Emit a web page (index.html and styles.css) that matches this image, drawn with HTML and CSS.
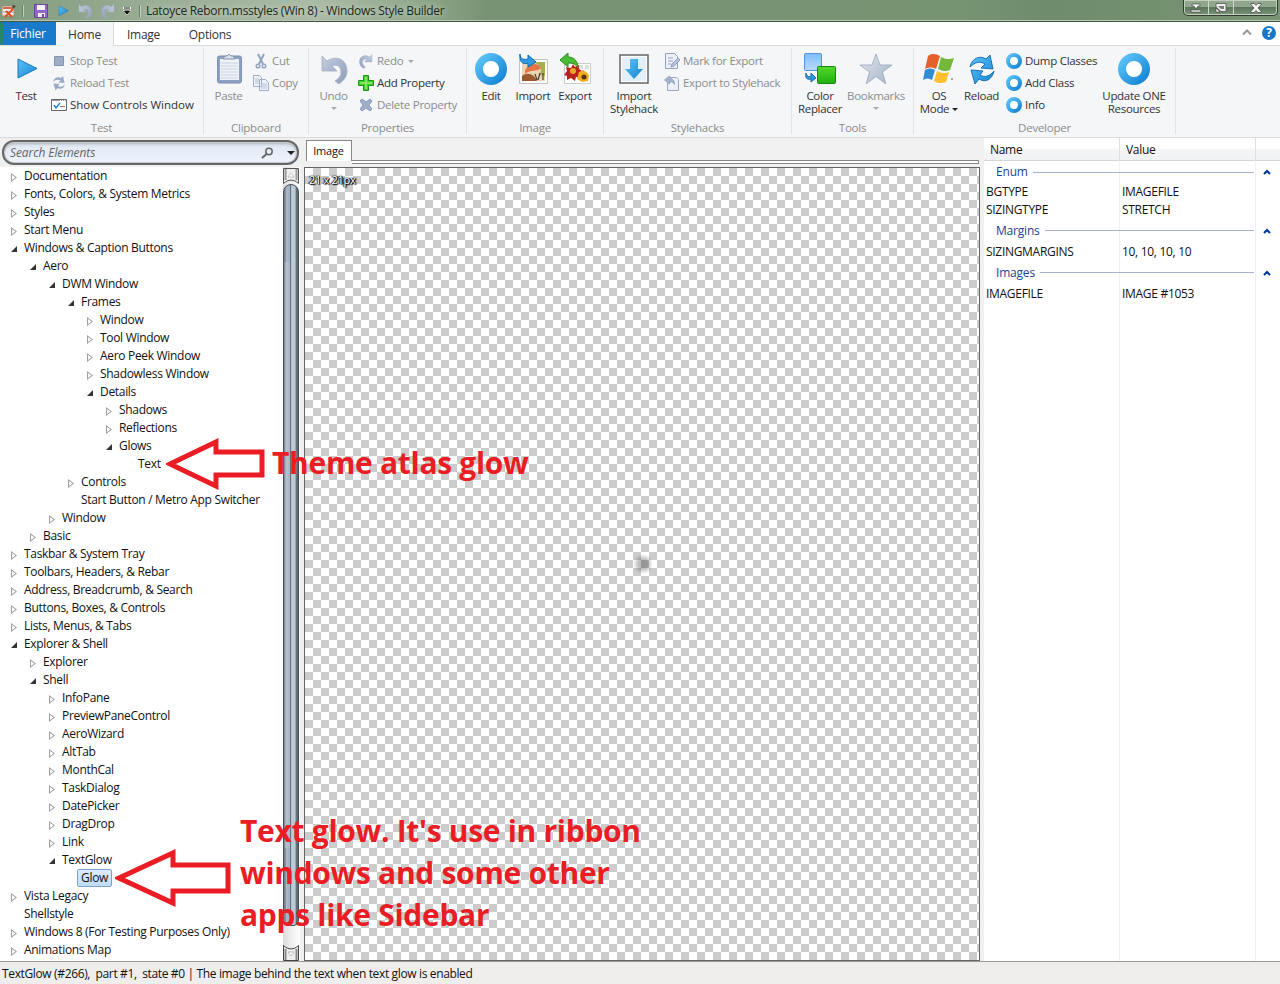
FILE: index.html
```html
<!DOCTYPE html>
<html lang="en">
<head>
<meta charset="utf-8">
<title>Windows Style Builder</title>
<link rel="stylesheet" href="styles.css">
</head>
<body>
<svg class="defs" width="0" height="0">
  <defs>
    <linearGradient id="blue" x1="0" y1="0" x2="1" y2="1"><stop offset="0" stop-color="#5cc4f8"/><stop offset="1" stop-color="#1584d4"/></linearGradient>
    <linearGradient id="dim" x1="0" y1="0" x2="1" y2="1"><stop offset="0" stop-color="#c3cede"/><stop offset="1" stop-color="#8d9dbb"/></linearGradient>
    <linearGradient id="pale" x1="0" y1="0" x2="1" y2="1"><stop offset="0" stop-color="#e3e8f0"/><stop offset="1" stop-color="#a5b1c6"/></linearGradient>
    <linearGradient id="sky" x1="0" y1="0" x2="0" y2="1"><stop offset="0" stop-color="#7ebcf8"/><stop offset="1" stop-color="#b9dcff"/></linearGradient>
    <linearGradient id="green" x1="0" y1="0" x2="0" y2="1"><stop offset="0" stop-color="#53d82d"/><stop offset="1" stop-color="#20ae10"/></linearGradient>
    <symbol id="play" viewBox="0 0 32 32"><path d="M8 6v19l19-9.500z" fill="url(#blue)" stroke="#1b78bd"/></symbol>
    <symbol id="ring" viewBox="0 0 32 32"><circle cx="16" cy="16" r="12" fill="#fff" stroke="url(#blue)" stroke-width="8"/></symbol>
    <symbol id="undo" viewBox="0 0 32 32"><path d="M4 3v15h15l-5-5c5-2 9 0 9 6 0 4-2 6-6 9l4 3c5-4 8-7 8-13C29 6 18 2 9 8z" fill="url(#dim)" stroke="#a3afc5" stroke-width=".8"/></symbol>
    <symbol id="reload" viewBox="0 0 32 32"><path d="M4 14C6 5 14 2 20 6l4-4 3 14-12-1 4-4c-5-3-10-2-15 3zM28 18c-2 9-9 12-15 8l-4 5-4-14 12 1-3 4c5 3 10 1 14-4z"/></symbol>
  </defs>
</svg>
<div class="window">
  <header class="titlebar">
    <svg class="app" width="16" height="16" viewBox="0 0 16 16"><path d="M1 3h12v10H1z" fill="#f5ece1" stroke="#a08c74"/><path d="M2 5h10" stroke="#d06a48" stroke-width="2"/><path d="M2 9h10" stroke="#8f9c9e" stroke-width="1"/><path d="M4 14l8-8M5 8l6 6" stroke="#e34d24" stroke-width="1.800"/><path d="M11 2l4 1-3 3" fill="#444"/></svg>
    <i class="tick t1"></i>
    <svg class="save" width="14" height="14" viewBox="0 0 14 14"><path d="M.5.500h13v13H.5z" fill="#8f67c9" stroke="#68479b"/><path d="M3 1h8v5H3zM4 9h7v4H4z" fill="#f5f1fb"/><path d="M8 10h2v3H8z" fill="#68479b"/></svg>
    <svg class="qplay" width="16" height="16"><use href="#play"/></svg>
    <svg class="qundo" width="16" height="16"><use href="#undo"/></svg>
    <svg class="qredo flip" width="16" height="16"><use href="#undo"/></svg>
    <svg class="qmore" width="8" height="8" viewBox="0 0 8 8"><path d="M0 0h8v2H0zM0 3h8L4 8z" fill="#fff"/><path d="M1 1h6M1.500 4h5L4 7z" fill="#111" stroke="#111"/></svg>
    <i class="tick t2"></i>
    <span class="title">Latoyce Reborn.msstyles (Win 8) - Windows Style Builder</span>
    <div class="caption">
      <span class="cb"><svg width="12" height="10" viewBox="0 0 12 10"><path d="M2 1h8v2H8L6 6 4 3H2zM1 7h10v2H1z" fill="#fff" stroke="#444" stroke-width=".7"/></svg></span>
      <span class="cb"><svg width="12" height="10" viewBox="0 0 12 10"><path d="M1 .500h10v8H6L1 4z" fill="#eee" stroke="#444" stroke-width=".7"/><path d="M3 3h6v3H6z" fill="#6b8769"/><path d="M1 5l4 4H1z" fill="#fff" stroke="#444" stroke-width=".7"/></svg></span>
      <span class="cb close"><svg width="12" height="10" viewBox="0 0 12 10"><path d="M1 .500h3l2 2 2-2h3v1L8 5l3 3.500v1H8l-2-2-2 2H1v-1L4 5 1 1.500z" fill="#fff" stroke="#444" stroke-width=".8"/></svg></span>
    </div>
  </header>
  <nav class="tabs">
    <span class="tab file">Fichier</span><span class="tab home">Home</span><span class="tab image">Image</span><span class="tab options">Options</span>
    <svg class="collapse" width="10" height="8" viewBox="0 0 10 8"><path d="M1 6.500l4-4 4 4" fill="none" stroke="#999" stroke-width="2"/></svg>
    <span class="help">?</span>
  </nav>
  <section class="ribbon">
    <div class="group g-test">
      <div class="tools">
        <div class="big"><svg width="32" height="32"><use href="#play"/></svg><span>Test</span></div>
        <div class="stack">
          <div class="small off"><svg width="16" height="16" viewBox="0 0 16 16"><path d="M3.500 3.500h9v9h-9z" fill="#a0adc7" stroke="#8492ae"/></svg>Stop Test</div>
          <div class="small off"><svg width="16" height="16" fill="#9aaac4"><use href="#reload"/></svg>Reload Test</div>
          <div class="small long"><svg width="16" height="16" viewBox="0 0 16 16"><path d="M.5 2.500h15v11H.5z" fill="#fff" stroke="#666"/><path d="M1 3.500h14" stroke="#999" stroke-dasharray="8 1 1 1 1 1"/><path d="M3 8l2 3 4-5" fill="none" stroke="#2189d4" stroke-width="1.500"/><path d="M9 9.500h5" stroke="#777"/></svg>Show Controls Window</div>
        </div>
      </div><div class="gname">Test</div>
    </div>
    <div class="group g-clip">
      <div class="tools">
        <div class="big off"><svg width="32" height="32" viewBox="0 0 32 32"><rect x="4.500" y="3" width="24" height="27" rx="2" fill="#8da0c1" stroke="#7f90b0"/><path d="M7 6h19v21H7z" fill="#eef1f6"/><path d="M8 10h17M8 13h17M8 16h17M8 19h17M8 22h17M8 25h17" stroke="#cbd2df"/><path d="M10 6l2-3h2l2-2 2 2h2l2 3z" fill="#d9e0ea" stroke="#8595b2"/></svg><span>Paste</span></div>
        <div class="stack">
          <div class="small off"><svg width="16" height="16" viewBox="0 0 16 16" fill="none" stroke="#95a4bf" stroke-width="2"><path d="M5 1l5 10M11 1L6 11"/><circle cx="5" cy="13" r="1.800" stroke-width="1.500"/><circle cx="11" cy="13" r="1.800" stroke-width="1.500"/></svg>Cut</div>
          <div class="small off"><svg width="16" height="16" viewBox="0 0 16 16" fill="#eef2f8" stroke="#a0afcb"><path d="M.5.500h6l2 2v9h-8zM6.500 4.500h6l3 3v8h-9z"/><path d="M2 4h4M2 6h4M2 8h4M8 9h6M8 11h6M8 13h6" stroke="#b7c3d9"/></svg>Copy</div>
        </div>
      </div><div class="gname">Clipboard</div>
    </div>
    <div class="group g-prop">
      <div class="tools">
        <div class="big off"><svg width="32" height="32"><use href="#undo"/></svg><span>Undo</span><i class="drop"></i></div>
        <div class="stack">
          <div class="small off"><svg class="flip" width="16" height="16"><use href="#undo"/></svg>Redo<i class="drop side"></i></div>
          <div class="small"><svg width="16" height="16" viewBox="0 0 16 16"><path d="M5.500.500h5v5h5v5h-5v5h-5v-5h-5v-5h5z" fill="#48cf28" stroke="#199414"/><path d="M8 2v12M2 8h12" stroke="#91ed70" stroke-width="1.500"/></svg>Add Property</div>
          <div class="small off"><svg width="16" height="16" viewBox="0 0 16 16"><path d="M2 4l2-2 4 3 4-3 2 2-3 4 3 4-2 2-4-3-4 3-2-2 3-4z" fill="#a0afc9" stroke="#8c9cba"/></svg>Delete Property</div>
        </div>
      </div><div class="gname">Properties</div>
    </div>
    <div class="group g-image">
      <div class="tools">
        <div class="big"><svg width="32" height="32"><use href="#ring"/></svg><span>Edit</span></div>
        <div class="big"><svg width="32" height="32" viewBox="0 0 32 32"><path d="M2.500 6.500h28v24h-28z" fill="#fff" stroke="#c3c3c3"/><path d="M5 9h23v19H5z" fill="#ead6b1"/><path d="M5 23c6-5 13-1 15 5H5z" fill="#9b592f"/><path d="M17 9h11v14l-6-1c4-5 2-9-5-13z" fill="#a6ae50"/><path d="M8 18c2-7 12-10 16-3-3 4-11 1-16 6z" fill="#e97446"/><path d="M18 21l2 6M23 20l-2 7M26 20v7" stroke="#473f34" stroke-width="1.200"/><path d="M3 1c0 5 4 6 8 5V2l8 7-8 5v-4C5 12 2 8 3 1z" fill="#329be4" stroke="#1169a9"/></svg><span>Import</span></div>
        <div class="big"><svg width="32" height="32" viewBox="0 0 32 32"><path d="M5.500 10.500h26v20h-26z" fill="#fff" stroke="#ccc"/><path d="M20 12h4v4h-4zM26 12h4v4h-4z" fill="#ddd"/><path d="M14 11l2 3 4-2v4l3 2-3 3 2 4-5-1-1 4-4-3-4 2v-4l-3-1 3-4-1-4 5 1z" fill="#b9231e"/><circle cx="14" cy="18" r="3" fill="#e9a825"/><path d="M20 19l4-2 3 2 3 3-1 6-6 1-5-3z" fill="#f3ad19"/><circle cx="25" cy="24" r="2.500" fill="#53330c"/><path d="M1 7l8-7v4c6 0 10 4 10 11-3-5-6-5-10-5v4z" fill="#48bc35" stroke="#29901f"/></svg><span>Export</span></div>
      </div><div class="gname">Image</div>
    </div>
    <div class="group g-hacks">
      <div class="tools">
        <div class="big"><svg width="32" height="32" viewBox="0 0 32 32"><path d="M2 2h28v28H2z" fill="#fff" stroke="#666" stroke-width="1.500"/><path d="M4 4h24v24H4z" fill="#e3f0fa"/><path d="M12 6h8v10h5l-9 10-9-10h5z" fill="url(#blue)"/></svg><span>Import<br>Stylehack</span></div>
        <div class="stack">
          <div class="small off"><svg width="16" height="16" viewBox="0 0 16 16" fill="#eef2f8" stroke="#8f9fbd"><path d="M1.500.500h9l3 3v12h-12z"/><path d="M4 5h5M4 8h5M4 11h3" /><path d="M8 11l6-6 2 2-6 6-3 1z" fill="#bac6da"/></svg>Mark for Export</div>
          <div class="small off"><svg width="16" height="16" viewBox="0 0 16 16" fill="#eef2f8" stroke="#98a7c3"><path d="M3.500 2.500h9l2 2v11h-11z"/><path d="M.5 5l5-4v2.500c4 0 5 3 5 6-2-3-3-2.500-5-2.500v2z" fill="#a6b3cb"/></svg>Export to Stylehack</div>
        </div>
      </div><div class="gname">Stylehacks</div>
    </div>
    <div class="group g-tools">
      <div class="tools">
        <div class="big"><svg width="32" height="32" viewBox="0 0 32 32"><rect x=".5" y=".5" width="17" height="17" rx="1" fill="url(#sky)" stroke="#5594d6"/><rect x="13.500" y="13.500" width="18" height="17" rx="1" fill="url(#green)" stroke="#188712"/><path d="M2 20c1 4 3 4 5 3v-3l5 5-5 4v-3c-4 1-6-1-5-6z" fill="#2f99dd" stroke="#176ba9"/></svg><span>Color<br>Replacer</span></div>
        <div class="big off wide"><svg width="32" height="32" viewBox="0 0 32 32"><path d="M16 1l4 11h12l-9.500 7L26 31l-10-7.500L6 31l3.500-12L0 12h12z" fill="url(#pale)" stroke="#9aa7bf" stroke-width=".8"/></svg><span>Bookmarks</span><i class="drop"></i></div>
      </div><div class="gname">Tools</div>
    </div>
    <div class="group g-dev">
      <div class="tools">
        <div class="big os"><svg width="32" height="32" viewBox="0 0 32 32"><path d="M5 3c4-3 8-2 12 0l-4 13c-4-2-7-2-11 0z" fill="#e5602a"/><path d="M18 4c4 2 8 3 13 1l-4 12c-4 2-8 1-12-1z" fill="#74b83c"/><path d="M2 17c4-2 7-2 10 0L9 27c-3-2-6-2-9 0z" fill="#328bd5"/><path d="M14 18c4 2 8 3 12 1l-3 10c-5 2-9 1-12-1z" fill="#fcbf2d"/><circle cx="29" cy="26" r="1" fill="#888"/></svg><span>OS<br>Mode<i class="drop dark"></i></span></div>
        <div class="big re"><svg width="32" height="32" fill="url(#blue)" stroke="#1b72b4"><use href="#reload"/></svg><span>Reload</span></div>
        <div class="stack">
          <div class="small"><svg width="16" height="16"><use href="#ring"/></svg>Dump Classes</div>
          <div class="small"><svg width="16" height="16"><use href="#ring"/></svg>Add Class</div>
          <div class="small"><svg width="16" height="16"><use href="#ring"/></svg>Info</div>
        </div>
        <div class="big up"><svg width="32" height="32"><use href="#ring"/></svg><span>Update ONE<br>Resources</span></div>
      </div><div class="gname">Developer</div>
    </div>
  </section>
  <main class="body">
    <aside class="left">
      <div class="search"><span>Search Elements</span><svg width="13" height="12" viewBox="0 0 13 12"><circle cx="8" cy="4.500" r="3.200" fill="none" stroke="#666" stroke-width="1.500"/><path d="M5.500 7L1 11" stroke="#666" stroke-width="2"/></svg><i class="drop dark"></i></div>
      <div class="treebox">
        <div class="tree">
          <div class="row l0 c">Documentation</div>
          <div class="row l0 c">Fonts, Colors, &amp; System Metrics</div>
          <div class="row l0 c">Styles</div>
          <div class="row l0 c">Start Menu</div>
          <div class="row l0 o">Windows &amp; Caption Buttons</div>
          <div class="row l1 o">Aero</div>
          <div class="row l2 o">DWM Window</div>
          <div class="row l3 o">Frames</div>
          <div class="row l4 c">Window</div>
          <div class="row l4 c">Tool Window</div>
          <div class="row l4 c">Aero Peek Window</div>
          <div class="row l4 c">Shadowless Window</div>
          <div class="row l4 o">Details</div>
          <div class="row l5 c">Shadows</div>
          <div class="row l5 c">Reflections</div>
          <div class="row l5 o">Glows</div>
          <div class="row l6">Text</div>
          <div class="row l3 c">Controls</div>
          <div class="row l3">Start Button / Metro App Switcher</div>
          <div class="row l2 c">Window</div>
          <div class="row l1 c">Basic</div>
          <div class="row l0 c">Taskbar &amp; System Tray</div>
          <div class="row l0 c">Toolbars, Headers, &amp; Rebar</div>
          <div class="row l0 c">Address, Breadcrumb, &amp; Search</div>
          <div class="row l0 c">Buttons, Boxes, &amp; Controls</div>
          <div class="row l0 c">Lists, Menus, &amp; Tabs</div>
          <div class="row l0 o">Explorer &amp; Shell</div>
          <div class="row l1 c">Explorer</div>
          <div class="row l1 o">Shell</div>
          <div class="row l2 c">InfoPane</div>
          <div class="row l2 c">PreviewPaneControl</div>
          <div class="row l2 c">AeroWizard</div>
          <div class="row l2 c">AltTab</div>
          <div class="row l2 c">MonthCal</div>
          <div class="row l2 c">TaskDialog</div>
          <div class="row l2 c">DatePicker</div>
          <div class="row l2 c">DragDrop</div>
          <div class="row l2 c">Link</div>
          <div class="row l2 o">TextGlow</div>
          <div class="row l3"><span class="sel">Glow</span></div>
          <div class="row l0 c">Vista Legacy</div>
          <div class="row l0">Shellstyle</div>
          <div class="row l0 c">Windows 8 (For Testing Purposes Only)</div>
          <div class="row l0 c">Animations Map</div>
        </div>
        <div class="scroll">
          <svg width="16" height="16" viewBox="0 0 16 16"><path d="M.5.500h15v15C11 11 5 11 .5 15.500z" fill="#eee" stroke="#555"/><path d="M2.500 1v11M13.500 1v11" stroke="#999" stroke-width="2"/><path d="M8 5l3 4H5z" fill="#fff" stroke="#aaa" stroke-width=".6"/></svg>
          <div class="thumb"></div>
          <div class="rail"></div>
          <svg width="16" height="16" viewBox="0 0 16 16"><path d="M.5 15.500V.500C5 5 11 5 15.500.500v15z" fill="#eee" stroke="#444"/><path d="M2.500 4v11M13.500 4v11" stroke="#888" stroke-width="2"/><path d="M5 7h6l-3 4z" fill="#fff" stroke="#999" stroke-width=".6"/></svg>
        </div>
      </div>
    </aside>
    <section class="center">
      <div class="doctabs"><span>Image</span><i></i></div>
      <div class="canvas"><span class="dim">21 x 21px</span><i class="glow"></i></div>
    </section>
    <aside class="props">
      <div class="phead"><span>Name</span><span>Value</span><span></span></div>
      <div class="pbody">
        <div class="cat"><b>Enum</b><i></i><svg width="8" height="6" viewBox="0 0 8 6"><path d="M1 5l3-3 3 3" /></svg></div>
        <div class="prop"><span>BGTYPE</span><span>IMAGEFILE</span></div>
        <div class="prop"><span>SIZINGTYPE</span><span>STRETCH</span></div>
        <div class="cat"><b>Margins</b><i></i><svg width="8" height="6" viewBox="0 0 8 6"><path d="M1 5l3-3 3 3" /></svg></div>
        <div class="prop"><span>SIZINGMARGINS</span><span>10, 10, 10, 10</span></div>
        <div class="cat"><b>Images</b><i></i><svg width="8" height="6" viewBox="0 0 8 6"><path d="M1 5l3-3 3 3" /></svg></div>
        <div class="prop"><span>IMAGEFILE</span><span>IMAGE #1053</span></div>
      </div>
    </aside>
  </main>
  <footer class="status"><span>TextGlow (#266),&nbsp; part #1,&nbsp; state #0 |&nbsp;</span><span>The image behind the text when text glow is enabled</span></footer>

  <svg class="arrow a1" width="100" height="52" viewBox="0 0 100 52"><path d="M4 26L50 4v10h46v23H50v11z"/></svg>
  <p class="note n1"><span>Theme atlas glow</span></p>
  <svg class="arrow a2" width="116" height="60" viewBox="0 0 116 60"><path d="M4 29L58 4v12h55v26H58v12z"/></svg>
  <p class="note n2"><span>Text glow. It's use in ribbon</span><br><span>windows and some other</span><br><span>apps like Sidebar</span></p>
</div>
</body>
</html>
```
FILE: styles.css
```css
* { box-sizing: border-box; }
body { margin: 0; overflow: hidden; font: 12px/18px "Open Sans", "Noto Sans", sans-serif; color: #111; }
svg { display: block; flex: none; }
.defs { position: absolute; }
.flip { transform: scaleX(-1); }
.window { position: relative; width: 1280px; height: 984px; display: flex; flex-direction: column; background: #f0f0f0; }

.titlebar { height: 22px; flex: none; display: flex; align-items: center; background: linear-gradient(90deg, #829b7e 0, #9bad96 12%, #aabaa5 25%, #8fa689 33%, #789373 38%, #769372 75%, #6f8d6c 82%, #789572 100%); border-bottom: 1px solid #405442; box-shadow: inset 0 -1px #b9c7b6; }
.app { margin-left: 1px; }
.tick { width: 2px; height: 12px; background: #69806a; border-right: 1px solid #c4d0c1; }
.t1 { margin-left: 5px; }
.save { margin-left: 10px; }
.qplay { margin-left: 7px; }
.qundo { margin-left: 6px; }
.qredo { margin-left: 7px; }
.qmore { margin-left: 7px; }
.t2 { margin-left: 8px; }
.title { margin-left: 5px; color: #1e271d; letter-spacing: -.29px; text-shadow: 0 0 6px #dbe4d8; white-space: nowrap; }
.caption { margin: 0 2px 0 auto; align-self: flex-start; height: 16px; display: flex; border: 1px solid #2f3d2f; border-top: 0; border-radius: 0 0 5px 5px; box-shadow: inset 0 0 0 1px #c1cebe; background: linear-gradient(#90a68d 50%, #5b765b 50%, #7b957a); }
.cb { width: 25px; display: flex; align-items: center; justify-content: center; border-right: 1px solid #cfd9cd; }
.close { width: 43px; border: 0; }

.tabs { height: 24px; flex: none; display: flex; background: #fff; border-bottom: 1px solid #dadbdc; font-size: 12px; line-height: 26px; color: #333; }
.tab { text-align: center; letter-spacing: -.25px; }
.file { width: 56px; height: 23px; line-height: 24px; background: #1979ca; color: #fff; border-left: 3px solid #24866e; padding-right: 3px; }
.home { width: 58px; height: 24px; background: #f5f6f7; border-right: 1px solid #dadbdc; }
.image { width: 59px; }
.options { width: 74px; }
.collapse { margin: 6px 10px 0 auto; }
.help { width: 14px; height: 14px; margin: 4px 4px 0 0; border-radius: 50%; background: #1677c8; color: #fff; font-weight: 700; font-size: 12px; line-height: 14px; text-align: center; }

.ribbon { height: 92px; flex: none; display: flex; background: #f5f6f7; border-bottom: 1px solid #dadbdc; padding-top: 2px; color: #333; font-size: 11.5px; }
.group { height: 86px; border-right: 1px solid #e2e3e4; }
.tools { height: 71px; display: flex; padding-top: 5px; }
.gname { text-align: center; line-height: 18px; color: #8b8c8e; letter-spacing: -.25px; }
.g-test { width: 204px; } .g-clip { width: 105px; } .g-prop { width: 158px; } .g-image { width: 137px; }
.g-hacks { width: 188px; } .g-tools { width: 122px; } .g-dev { width: 262px; }
.big { width: 50px; flex: none; display: flex; flex-direction: column; align-items: center; line-height: 13px; text-align: center; white-space: nowrap; letter-spacing: -.3px; }
.big > span { margin-top: 4px; }
.off { color: #8b8c8e; }
.drop { display: inline-block; border: 3px solid transparent; border-top-color: #aaa; border-bottom: 0; }
.big > .drop { margin-top: 5px; }
.drop.dark { border-top-color: #222; vertical-align: 2px; margin-left: 3px; }
.drop.side { margin-left: 2px; }
.stack { margin-top: -3px; }
.small { height: 22px; display: flex; align-items: center; gap: 3px; white-space: nowrap; letter-spacing: -.28px; }
.long { letter-spacing: 0; }
.g-test .big { width: 52px; margin-right: -1px; }
.g-clip .big { width: 49px; }
.g-prop .big { width: 49px; }
.g-image .tools { padding-left: 3px; }
.g-image .big { width: 42px; }
.g-hacks .big { width: 60px; }
.g-tools .big { width: 56px; }
.g-dev .re { width: 35px; margin-right: 7px; }
.g-dev .stack { width: 92px; }
.g-dev .up { width: 72px; }

.body { height: 823px; flex: none; display: flex; }
.left { width: 300px; display: flex; flex-direction: column; }
.search { height: 25px; margin: 2px 1px 2px 2px; border: 2px solid #666; border-radius: 12px; box-shadow: inset 0 0 0 1px #c6cbd1, inset 0 2px 3px #abb2bc; background: linear-gradient(#dfe7f2, #eef4fe); display: flex; align-items: center; padding: 0 2px 0 6px; font-style: italic; color: #666; }
.search span { flex: 1; letter-spacing: -.1px; }
.search .drop { border-width: 4px 4px 0; margin-left: 13px; }
.treebox { flex: 1; display: flex; background: #fff; }
.tree { flex: 1; }
.row { height: 18px; display: flex; align-items: center; white-space: nowrap; letter-spacing: -.31px; }
.row::before { content: ""; width: 8px; height: 9px; margin: 3px 5px 0 2px; flex: none; }
.c::before { background: #a0a0a0; clip-path: polygon(0 0, 6px 4.500px, 0 9px, 0 0, 1px 2px, 1px 7px, 4.500px 4.500px, 1px 2px); }
.o::before { background: #333; clip-path: polygon(6px 1px, 6px 7px, 0 7px); }
.l0 { padding-left: 9px; } .l1 { padding-left: 28px; } .l2 { padding-left: 47px; } .l3 { padding-left: 66px; }
.l4 { padding-left: 85px; } .l5 { padding-left: 104px; } .l6 { padding-left: 123px; }
.sel { margin-left: -4px; padding: 0 3px; height: 18px; line-height: 16px; border: 1px solid #7da2ce; border-radius: 2px; background: linear-gradient(#dcebfc, #c1dbfc); }
.scroll { width: 17px; padding-top: 1px; display: flex; flex-direction: column; background: linear-gradient(90deg, #ddd, #fff); }
.thumb { height: 742px; width: 16px; border: 1px solid #444c55; border-radius: 8px 8px 6px 6px; background: linear-gradient(90deg, #777f88a0 0 16%, #8090b030 16% 46%, #0000 46%) 0 0 / 100% 77px no-repeat, linear-gradient(90deg, #777f88a0 0 16%, #8090b030 16% 46%, #0000 46%) 0 100% / 100% 77px no-repeat, linear-gradient(90deg, #777f88 0, #b5c1cf 15%, #a9b7c8 40%, #5e6974 46%, #becbd5 54%, #b8cad4 78%, #606b75 90%); }
.rail { flex: 1; }

.center { width: 684px; padding-left: 4px; display: flex; flex-direction: column; }
.doctabs { height: 29px; display: flex; width: 676px; padding: 2px 1px 0 2px; }
.doctabs span { width: 46px; height: 21px; border: 1px solid #888; border-bottom: 0; background: #fff; text-align: center; padding-right: 1px; line-height: 19px; font-size: 11px; letter-spacing: -.2px; }
.doctabs i { flex: 1; height: 4px; margin-top: 20px; border: 1px solid #888; border-left: 0; background: #fff; }
.canvas { position: relative; flex: 1; width: 676px; border: 1px solid #666; background: repeating-conic-gradient(#fff 0 25%, #ccc 0 50%) 0 8px / 16px 16px; }
.dim { display: block; padding: 3px 0 0 4px; font-size: 11px; color: #fff; letter-spacing: -.3px; text-shadow: 1px 1px 1px #000, -1px 0 1px #000, 1px 0 1px #000, 0 0 2px #000; }
.glow { position: absolute; left: 328px; top: 386px; width: 20px; height: 20px; border-radius: 50%; background: radial-gradient(#0004 0 30%, #0000 72%); }

.props { width: 296px; display: flex; flex-direction: column; background: #fff; letter-spacing: -.3px; }
.phead { height: 23px; display: grid; grid-template-columns: 136px 136px 1fr; background: linear-gradient(#fff 45%, #f3f4f6 55%, #f0f2f4); border-bottom: 1px solid #d5d5d5; line-height: 24px; }
.phead span { padding-left: 6px; border-right: 1px solid #dedfe1; }
.phead span:last-child { border: 0; }
.pbody { flex: 1; background: linear-gradient(#edf2f8, #edf2f8) 135px 0 / 1px 100% no-repeat, linear-gradient(#edf2f8, #edf2f8) 271px 0 / 1px 100% no-repeat; }
.cat { height: 22px; display: flex; align-items: center; padding-left: 12px; color: #1e3f94; letter-spacing: -.2px; }
.prop + .cat { height: 24px; padding-bottom: 1px; }
.cat b { font-weight: 400; }
.cat i { flex: 1; height: 1px; margin: 0 9px 0 5px; background: #a5b5d0; }
.cat svg { margin-right: 9px; fill: none; stroke: #003399; stroke-width: 2; }
.prop { height: 18px; display: grid; grid-template-columns: 136px 1fr; padding-left: 2px; }

.status { flex: 1; border-top: 1px solid #999; padding-left: 2px; line-height: 23px; background: #f0eeec; white-space: nowrap; letter-spacing: -.36px; }

.arrow { position: absolute; fill: #fff; stroke: #ea1c24; stroke-width: 5; }
.a1 { left: 166px; top: 438px; }
.a2 { left: 115px; top: 849px; }
.note { position: absolute; margin: 0; font: 700 30px/42px "Open Sans", sans-serif; letter-spacing: -.3px; color: #ea1c24; white-space: nowrap; }
.n1 { left: 272px; top: 442px; }
.n2 { left: 240px; top: 810px; }
```
